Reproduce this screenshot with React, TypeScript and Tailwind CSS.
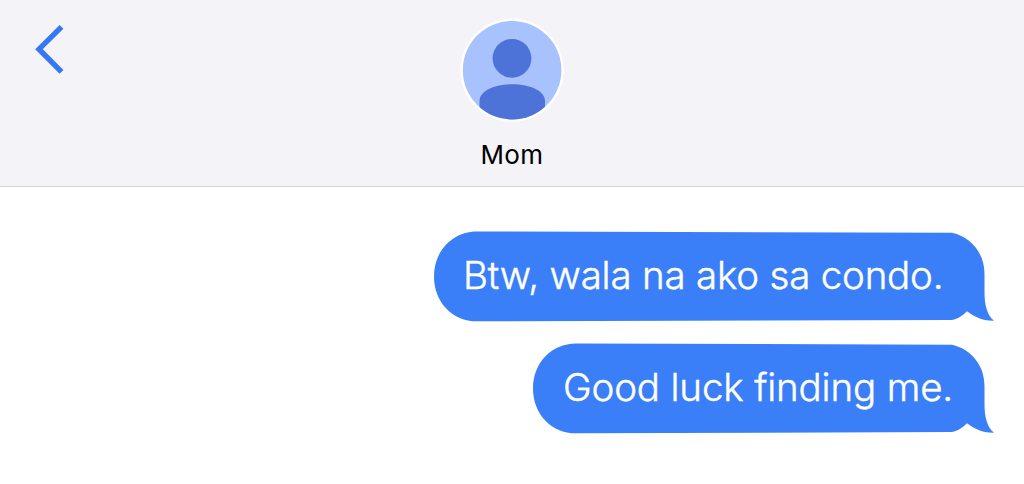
type BubbleProps = {
  text: string;
  width: number;
  className: string;
};

const Bubble = ({ text, width, className }: BubbleProps) => {
  // w is the right edge of the bubble, the tail sticks out past it
  const w = width;
  const shape = `M43 0.5 L${w - 33} 1.7 C${w - 14} 6 ${w - 0.5} 22 ${w - 0.5} 43 V61 C${w - 0.5} 74 ${w + 2} 84 ${w + 9} 89.8 C${w - 1} 90 ${w - 9} 87 ${w - 18} 80.3 C${w - 23} 85 ${w - 27} 88 ${w - 33} 89 L43 90.3 C18.5 90.3 0 71 0 45.4 C0 20 18.5 0.5 43 0.5 Z`;

  return (
    <div className={`relative flex h-[91px] items-center pb-0.5 ${className}`}>
      <svg
        className="absolute inset-0 h-full w-full overflow-visible"
        viewBox={`0 0 ${w} 91`}
        aria-hidden="true"
      >
        <path d={shape} fill="#3a7ff7" />
      </svg>
      <p className="relative whitespace-nowrap text-white [-webkit-text-stroke:0.45px_white]">
        {text}
      </p>
    </div>
  );
};

const Avatar = () => {
  return (
    <svg className="h-[104px] w-[104px]" viewBox="0 0 104 104">
      <defs>
        <clipPath id="face">
          <circle cx="52.1" cy="52.2" r="49.3" />
        </clipPath>
      </defs>
      <circle cx="52" cy="52.2" r="51.6" fill="#ffffff" />
      <g clipPath="url(#face)">
        <rect width="104" height="104" fill="#a8c2fd" />
        <circle cx="52" cy="40.3" r="19.4" fill="#4d73d9" />
        <path
          d="M19.5 104 V83 C19.5 73 34 66.2 52.3 66.2 C70.5 66.2 85 73 85 83 V104 Z"
          fill="#4d73d9"
        />
      </g>
    </svg>
  );
};

const App = () => {
  return (
    <div className="flex h-[484px] w-[1024px] flex-col overflow-hidden bg-white font-['Inter',sans-serif]">
      <header className="grid h-[187px] grid-cols-[1fr_auto_1fr] border-b border-[#d5d3d7] bg-[#f4f3f7]">
        <button aria-label="Back" className="self-start pt-6 pl-[34px]">
          <svg className="h-[50px] w-[32px]" viewBox="0 0 32 50" fill="none">
            <path d="M27.5 2.8 L5 25.2 L27.5 47.8" stroke="#3478f6" strokeWidth="5.4" />
          </svg>
        </button>
        <div className="flex flex-col items-center pt-[18px]">
          <Avatar />
          <h1 className="mt-[17px] text-[26px] leading-8 tracking-[0.4px] text-black">
            Mom
          </h1>
        </div>
      </header>
      <main className="flex flex-col items-end gap-[21px] pt-11 pr-[39px] text-[38.5px] font-light">
        <Bubble
          text="Btw, wala na ako sa condo."
          width={551}
          className="w-[551px] pl-[29px] tracking-[-0.2px]"
        />
        <Bubble
          text="Good luck finding me."
          width={452}
          className="w-[452px] pl-[30px] tracking-[-0.15px]"
        />
      </main>
    </div>
  );
};

export default App;
